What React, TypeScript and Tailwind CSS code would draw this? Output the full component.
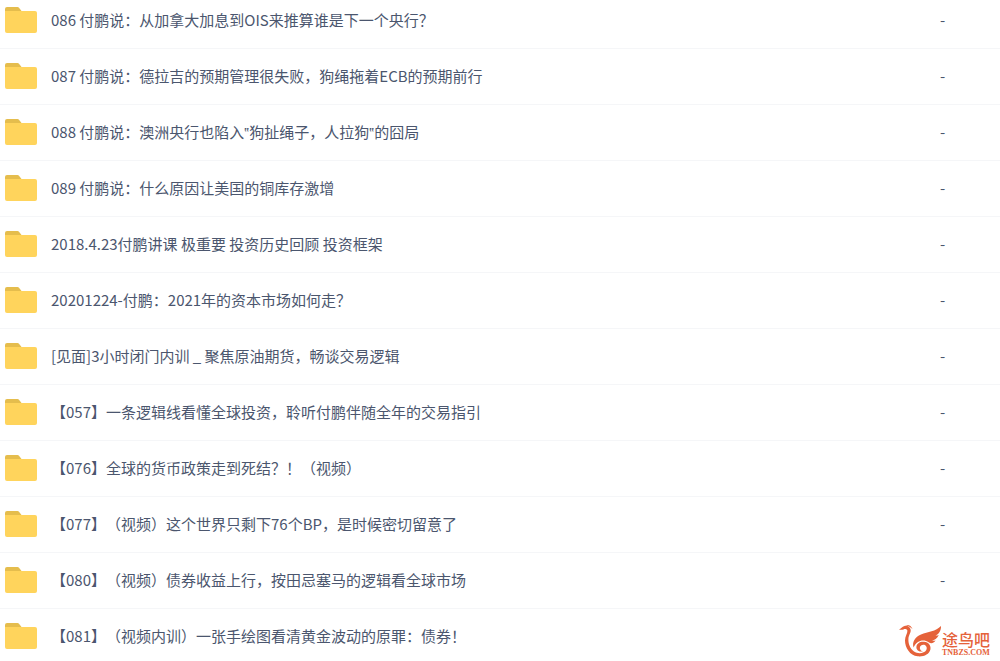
const folders = [
  { name: '086 付鹏说：从加拿大加息到OIS来推算谁是下一个央行？', size: '-' },
  { name: '087 付鹏说：德拉吉的预期管理很失败，狗绳拖着ECB的预期前行', size: '-' },
  { name: '088 付鹏说：澳洲央行也陷入‟狗扯绳子，人拉狗‟的囧局', size: '-' },
  { name: '089 付鹏说：什么原因让美国的铜库存激增', size: '-' },
  { name: '2018.4.23付鹏讲课 极重要 投资历史回顾 投资框架', size: '-' },
  { name: '20201224-付鹏：2021年的资本市场如何走？', size: '-' },
  { name: '[见面]3小时闭门内训 _ 聚焦原油期货，畅谈交易逻辑', size: '-' },
  { name: '【057】一条逻辑线看懂全球投资，聆听付鹏伴随全年的交易指引', size: '-' },
  { name: '【076】全球的货币政策走到死结？！（视频）', size: '-' },
  { name: '【077】（视频）这个世界只剩下76个BP，是时候密切留意了', size: '-' },
  { name: '【080】（视频）债券收益上行，按田忌塞马的逻辑看全球市场', size: '-' },
  { name: '【081】（视频内训）一张手绘图看清黄金波动的原罪：债券！', size: '' },
];

function FolderIcon() {
  return (
    <svg className="h-[26px] w-8 shrink-0" viewBox="0 0 32 26" aria-hidden="true">
      <path d="M0 2a2 2 0 0 1 2-2h10.5a2 2 0 0 1 1.5.7L16.5 4v6H0z" fill="#e5bd4d" />
      <path d="M0 4h30a2 2 0 0 1 2 2v18a2 2 0 0 1-2 2H2a2 2 0 0 1-2-2z" fill="#ffd45c" />
    </svg>
  );
}

function SiteLogo() {
  return (
    <div className="absolute right-2.5 bottom-1 flex items-end text-[#e5623a]">
      <svg className="h-8 w-[43px]" viewBox="0 0 43 32" fill="currentColor" aria-hidden="true">
        {/* head, neck and body */}
        <path d="M0 4.5C2 4 3 1.6 5.5 1C8.5.4 11 2 11.6 4.6C12.3 7.6 9.6 10 9.4 14C9.2 18.5 11 23.5 15 26.5C19 29.2 25.2 28.6 27.3 25C28.6 22.4 27 19.6 24.2 19.7C21.6 19.8 20.2 22.3 21.3 24.6C21.8 25.7 22.8 26.2 24 26.1C20.8 27.7 17.2 25.4 17.4 22C17.6 18.4 21 16.4 25 16.8C29.6 17.3 32.3 20.5 31.4 24.5C30.2 29.5 24.5 32 18.5 31.3C11 30.4 6 23 6 15.5C6 11.5 8.6 8.4 8.4 5.8C8.2 4 6.2 3.6 4.5 4.4C3 5 1.4 5 0 4.5Z" />
        {/* wing */}
        <path d="M42 1C42.2 5.8 39.8 9.3 36.4 10.4C37.6 10.7 38.6 10.5 39.8 10C38.3 13.6 35.4 15.2 33 15.3C34.2 15.8 35.4 15.8 36.6 15.4C34.4 18.6 31.8 18.7 29.6 17.2C24.5 13.8 17.3 15.6 14.6 22.6C12.8 17 16 11.8 22 9.4C28.8 6.6 36.8 6.6 42 1Z" />
        {/* crest */}
        <path d="M7 .2C10-.4 12.4 1.2 13.6 4.2C12 2.4 10 1.2 7 .2Z" />
      </svg>
      <div className="flex flex-col gap-0.5">
        <span className="text-[16px] leading-4 font-medium">途鸟吧</span>
        <span className="font-['Liberation_Serif','Noto_Sans_CJK_SC',serif] text-[8px] leading-2 font-bold">
          TNBZS.COM
        </span>
      </div>
    </div>
  );
}

export default function App() {
  return (
    <main className="relative h-screen overflow-hidden bg-white font-['Noto_Sans_CJK_SC',sans-serif] text-[15px] leading-5 text-[#4b566e] [text-spacing-trim:space-all]">
      <table className="-mt-2 w-full border-collapse">
        <tbody>
          {folders.map(folder => (
            <tr key={folder.name} className="h-14 border-b border-[#f5f6f8]">
              <td className="py-0 pl-[5px]">
                <div className="flex items-center gap-3.5">
                  <FolderIcon />
                  <a href="#" className="whitespace-nowrap">
                    {folder.name}
                  </a>
                </div>
              </td>
              <td className="w-[60px] p-0">{folder.size}</td>
            </tr>
          ))}
        </tbody>
      </table>
      <SiteLogo />
    </main>
  );
}
